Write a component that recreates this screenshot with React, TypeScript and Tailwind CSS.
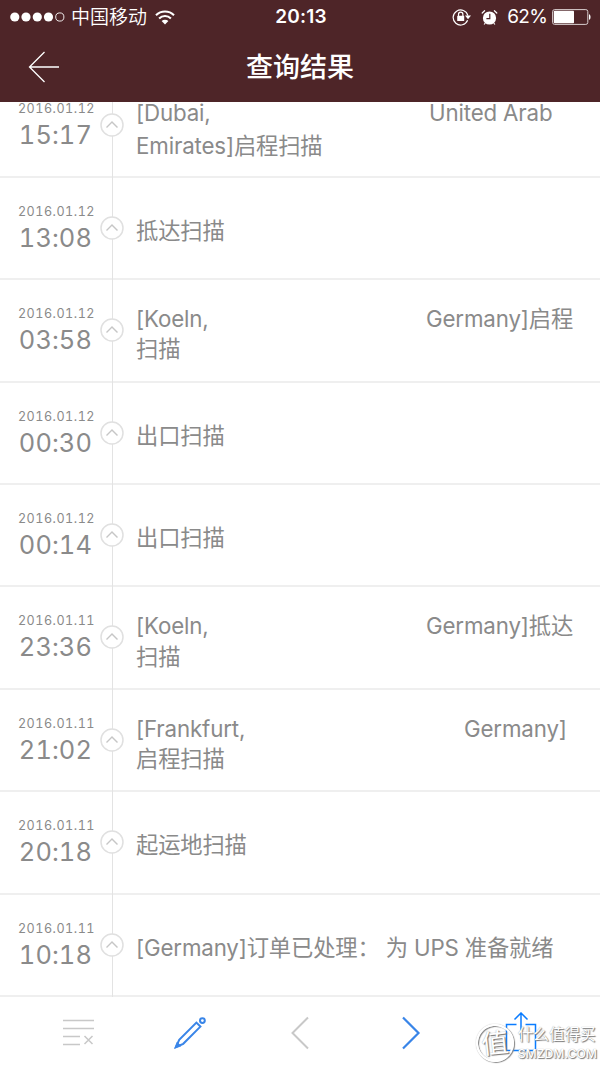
import { ReactNode } from "react";
import { clsx } from "clsx";

type Line = { text: string; tail?: string; lead?: string };

interface Scan {
  date: string;
  time: string;
  lines: Line[];
  leading?: string;
}

const scans: Scan[] = [
  {
    date: "2016.01.12",
    time: "15:17",
    lines: [
      { text: "[Dubai,", tail: "United Arab", lead: "w-[293px]" },
      { text: "Emirates]启程扫描" },
    ],
    leading: "leading-[33px]",
  },
  { date: "2016.01.12", time: "13:08", lines: [{ text: "抵达扫描" }] },
  {
    date: "2016.01.12",
    time: "03:58",
    lines: [
      { text: "[Koeln,", tail: "Germany]启程", lead: "w-[290px]" },
      { text: "扫描" },
    ],
  },
  { date: "2016.01.12", time: "00:30", lines: [{ text: "出口扫描" }] },
  { date: "2016.01.12", time: "00:14", lines: [{ text: "出口扫描" }] },
  {
    date: "2016.01.11",
    time: "23:36",
    lines: [
      { text: "[Koeln,", tail: "Germany]抵达", lead: "w-[290px]" },
      { text: "扫描" },
    ],
  },
  {
    date: "2016.01.11",
    time: "21:02",
    lines: [
      { text: "[Frankfurt,", tail: "Germany]", lead: "w-[328px]" },
      { text: "启程扫描" },
    ],
  },
  { date: "2016.01.11", time: "20:18", lines: [{ text: "起运地扫描" }] },
  {
    date: "2016.01.11",
    time: "10:18",
    lines: [{ text: "[Germany]订单已处理： 为 UPS 准备就绪" }],
  },
];

function StatusBar() {
  return (
    <div className="grid h-8 grid-cols-[1fr_auto_1fr] items-center pl-[10px] pr-[8px]">
      <div className="flex items-center">
        <svg width="55" height="10" viewBox="0 0 55 10" fill="#fff">
          <circle cx="4.8" cy="5" r="4.6" />
          <circle cx="16" cy="5" r="4.6" />
          <circle cx="27.3" cy="5" r="4.6" />
          <circle cx="38.5" cy="5" r="4.6" />
          <circle cx="49.8" cy="5" r="4.1" fill="none" stroke="#fff" strokeWidth="0.9" />
        </svg>
        <span className="ml-[6px] pt-[2px] text-[19px] leading-8 font-[350]">中国移动</span>
        <svg className="ml-[8px]" width="20" height="15" viewBox="0 0 20 15" fill="none">
          <path d="M1 5.2a12.8 12.8 0 0 1 18 0" stroke="#fff" strokeWidth="2.1" />
          <path d="M4.1 8.4a8.4 8.4 0 0 1 11.8 0" stroke="#fff" strokeWidth="2.1" />
          <path d="M6.6 11.1a4.9 4.9 0 0 1 6.8 0L10 14.5Z" fill="#fff" />
        </svg>
      </div>
      <span className="pt-[1px] text-[19px] font-semibold tracking-[0.2px]">20:13</span>
      <div className="flex items-center justify-end">
        <svg width="19" height="18" viewBox="0 0 19 18" fill="none">
          <path d="M15.6 12.3A7.5 7.5 0 1 1 15.9 7.6" stroke="#fff" strokeWidth="1.2" />
          <path d="M13 7.6h6l-3 3.6Z" fill="#fff" />
          <rect x="5.2" y="7.8" width="7" height="5.2" rx="0.6" fill="#fff" />
          <path d="M6.5 8V6.4a2.2 2.2 0 0 1 4.4 0V8" stroke="#fff" strokeWidth="1.2" />
        </svg>
        <svg className="ml-[10px]" width="17" height="17" viewBox="0 0 17 17" fill="none">
          <circle cx="8.5" cy="9" r="6.6" fill="#fff" />
          <path d="M8.8 4.8v4.8H5.4" stroke="#4e2528" strokeWidth="1.2" />
          <path d="M1.2 4 3.6 1.7M15.8 4l-2.4-2.3" stroke="#fff" strokeWidth="1.2" strokeLinecap="round" />
          <path d="m4.3 14-1.2 1.5M12.7 14l1.2 1.5" stroke="#fff" strokeWidth="1.2" />
        </svg>
        <span className="ml-[9px] pt-[1px] text-[19px] tracking-[-0.8px]">62%</span>
        <svg className="ml-[5px]" width="40" height="16" viewBox="0 0 40 16">
          <rect x="0.6" y="0.6" width="35.2" height="14.8" rx="2" fill="none" stroke="#d9cfd0" strokeWidth="1" />
          <rect x="1.8" y="1.8" width="20.2" height="12.4" rx="0.8" fill="#fff" />
          <path d="M37 5.2c2 .3 2 5.3 0 5.6Z" fill="#fff" />
        </svg>
      </div>
    </div>
  );
}

function Header() {
  return (
    <header className="h-[102.4px] shrink-0 bg-[#4e2528] text-white">
      <StatusBar />
      <div className="grid h-[70px] grid-cols-[1fr_auto_1fr] items-center">
        <svg className="ml-[28px]" width="32" height="32" viewBox="0 0 32 32" fill="none" stroke="#fff" strokeWidth="1.3">
          <path d="M16.5 1 1.5 16l15 15M1.5 16H31" />
        </svg>
        <h1 className="pt-[3px] text-[27px] font-medium">查询结果</h1>
      </div>
    </header>
  );
}

function ScanRow({ scan }: { scan: Scan }) {
  return (
    <li className="flex h-[102.4px] shrink-0 border-b-2 border-[#efefef] text-[#8a8a8a]">
      <div className="flex w-[92px] flex-col items-end pt-[26px] tabular-nums">
        <span className="-mr-[3px] text-[12.6px] leading-4 tracking-[0.5px]">{scan.date}</span>
        <span className="mt-[2px] text-[25.4px] leading-8 tracking-[0.1px]">
          {scan.time}
        </span>
      </div>
      <div className="relative ml-[8px] w-6">
        <div className="absolute -bottom-[2px] left-[12px] top-0 w-px bg-[#e3e3e3]" />
        <svg className="absolute left-0 top-[38px]" width="24" height="24" viewBox="0 0 24 24">
          <circle cx="12" cy="12" r="11" fill="#fff" stroke="#e0e0e0" strokeWidth="1.5" />
          <path d="M6.5 14.6 12 9l5.5 5.6" fill="none" stroke="#c6c6c6" strokeWidth="1.4" />
        </svg>
      </div>
      <div
        className={clsx(
          "ml-[12px] flex flex-col justify-center text-[22.3px] whitespace-pre",
          scan.leading ?? "leading-[30.5px]",
          scan.leading ? "pt-[6px]" : scan.lines.length > 1 ? "pt-[8px]" : "pt-[6px]"
        )}
      >
        {scan.lines.map((line) => (
          <div key={line.text} className="flex tracking-[-0.15px]">
            <span className={line.lead}>{line.text}</span>
            {line.tail && <span>{line.tail}</span>}
          </div>
        ))}
      </div>
    </li>
  );
}

function ToolButton({ children, label }: { children: ReactNode; label: string }) {
  return (
    <button aria-label={label} className="flex w-[111px] items-center justify-center">
      {children}
    </button>
  );
}

function Toolbar() {
  return (
    <nav className="relative flex h-[70px] shrink-0 items-center justify-center pt-px">
      <ToolButton label="clear">
        <svg className="ml-[2px]" width="32" height="32" viewBox="0 0 32 32" fill="none" stroke="#c8c8c8" strokeWidth="1.5">
          <path d="M0 3.5h31M0 11.5h31M0 19.5h17M0 27.5h17M21.5 19l8 8M29.5 19l-8 8" />
        </svg>
      </ToolButton>
      <ToolButton label="edit">
        <svg className="ml-[1px]" width="34" height="34" viewBox="0 0 34 34" fill="none" stroke="#3985e8" strokeWidth="2">
          <path d="m3 31 3.2-7.2L23.4 6.6l4 4L10.2 27.8Z" />
          <path d="m1.7 32.3 2.4-6.3 4 4Z" fill="#3985e8" strokeWidth="0.6" />
          <circle cx="29.4" cy="4.6" r="2.4" />
        </svg>
      </ToolButton>
      <ToolButton label="back">
        <svg width="20" height="34" viewBox="0 0 20 34" fill="none" stroke="#c8c8c8" strokeWidth="2">
          <path d="M18 1.5 2.5 17 18 32.5" />
        </svg>
      </ToolButton>
      <ToolButton label="forward">
        <svg width="20" height="34" viewBox="0 0 20 34" fill="none" stroke="#3985e8" strokeWidth="2.2">
          <path d="M2 1.5 17.5 17 2 32.5" />
        </svg>
      </ToolButton>
      <ToolButton label="share">
        <svg className="-ml-[2px]" width="32" height="42" viewBox="0 0 32 42" fill="none" stroke="#0a7cff" strokeWidth="1.5">
          <path d="M11.5 12.5H1.5v26h29v-26h-10M16 27V1M9.5 7.5 16 1l6.5 6.5" />
        </svg>
      </ToolButton>
      <Watermark />
    </nav>
  );
}

function Watermark() {
  return (
    <div className="absolute right-[3px] top-[26px] flex items-center text-white [text-shadow:1px_1px_1px_#777,0_0_1px_#999]">
      <div className="flex size-[38px] -rotate-6 items-center justify-center rounded-full border-2 border-white text-[27px] leading-none shadow-[1px_1px_1px_#888,inset_1px_1px_1px_#888,0_0_1px_#999]">
        值
      </div>
      <div className="ml-[4px] flex flex-col whitespace-nowrap">
        <span className="pt-[1px] text-[15.6px] leading-[21px]">什么值得买</span>
        <span className="text-[12.2px] leading-[18px] font-medium">SMZDM.COM</span>
      </div>
    </div>
  );
}

export default function App() {
  return (
    <div className="flex h-[1067px] w-[600px] flex-col overflow-hidden bg-white font-['Inter','Noto_Sans_CJK_SC',sans-serif]">
      <Header />
      {/* scrolled to the end, the oldest scan sits on the toolbar */}
      <ul className="flex min-h-0 flex-1 flex-col justify-end overflow-hidden">
        {scans.map((scan) => (
          <ScanRow key={scan.date + scan.time} scan={scan} />
        ))}
      </ul>
      <Toolbar />
    </div>
  );
}
